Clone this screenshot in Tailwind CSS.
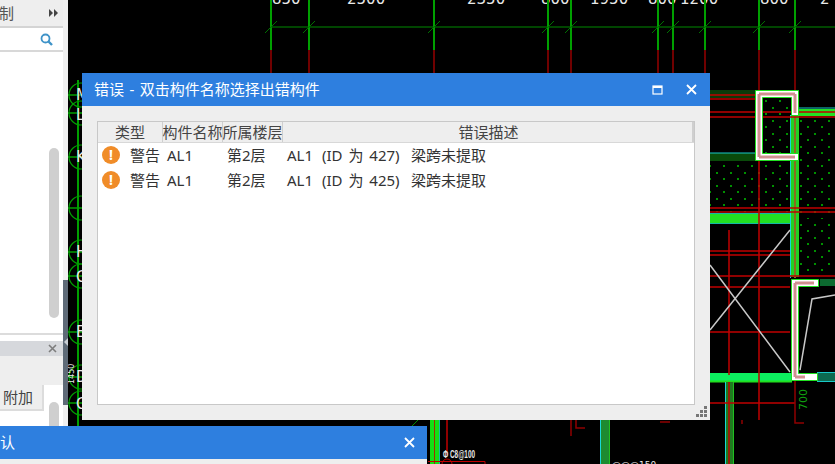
<!DOCTYPE html>
<html lang="en">
<head>
  <meta charset="UTF-8">
  <title>错误</title>
  <script src="https://cdn.jsdelivr.net/npm/@tailwindcss/browser@4"></script>
</head>
<body class="bg-black">
  <main class="relative w-[835px] h-[464px] overflow-hidden bg-black font-['Noto_Sans','Noto_Sans_CJK_SC',sans-serif] text-[15px] leading-none text-[#333]">

    <!-- cad canvas -->
    <svg class="absolute left-0 top-0" width="835" height="464" viewBox="0 0 835 464" fill="none">
      <g font-family="DejaVu Sans" font-size="15" fill="#e8e8e8">
        <text x="272" y="4">850</text><text x="347" y="4">2500</text><text x="467" y="4">2350</text>
        <text x="541" y="4">800</text><text x="590" y="4">1950</text><text x="648" y="4">800</text>
        <text x="680" y="4">1200</text><text x="760" y="4">800</text><text x="820" y="4">2</text>
      </g>
      <path d="M271 0V50M309 0V50M434 0V50M548 0V50M571 0V50M658 0V50M673 0V50M705 0V50M759 0V50M795 0V50" stroke="#00a000" stroke-width="2"/>
      <path d="M271 50V73M309 50V73M434 50V73M548 50V73M571 50V73M658 50V73M673 50V73M705 50V73M759 50V90M795 50V90" stroke="#700000" stroke-width="2"/>
      <path d="M271 27H835" stroke="#008a00" stroke-width="1"/>
      <path d="M265 33L277 21M303 33L315 21M428 33L440 21M542 33L554 21M565 33L577 21M652 33L664 21M667 33L679 21M699 33L711 21M753 33L765 21M789 33L801 21" stroke="#007000" stroke-width="1"/>

      <!-- left axis bubbles -->
      <g stroke="#00a000" stroke-width="1.200">
        <path d="M78 80V464" stroke-width="2"/>
        <circle cx="81" cy="95" r="12"/><circle cx="81" cy="113" r="12"/><circle cx="81" cy="157" r="12"/>
        <circle cx="81" cy="208" r="12"/><circle cx="81" cy="252" r="12"/><circle cx="81" cy="276" r="12"/>
        <circle cx="81" cy="332" r="12"/><circle cx="81" cy="377" r="12"/><circle cx="81" cy="403" r="12"/>
        <path d="M68 95H82M68 113H82M68 157H82M68 208H82M68 252H82M68 276H82M68 332H82M68 377H82M68 403H82" stroke-width="1.500"/>
      </g>
      <g font-family="DejaVu Sans" font-size="15" fill="#e8e8e8">
        <text x="76" y="100">M</text><text x="76" y="120">L</text><text x="76" y="162">K</text>
        <text x="76" y="257">H</text><text x="76" y="282">G</text><text x="76" y="337">E</text>
        <text x="76" y="382">D</text><text x="76" y="409">C</text>
      </g>
      <text transform="translate(74 384) rotate(-90)" font-family="DejaVu Sans" font-size="8" fill="#e8e8e8">1450</text>

      <!-- hatch -->
      <defs>
        <pattern id="dots" width="14" height="13" patternUnits="userSpaceOnUse">
          <rect x="2" y="3" width="2" height="2" fill="#009000"/>
          <rect x="9" y="9" width="2" height="2" fill="#009000"/>
        </pattern>
      </defs>
      <rect x="710" y="165" width="80" height="47" fill="url(#dots)"/>
      <rect x="763" y="100" width="27" height="53" fill="url(#dots)"/>
      <rect x="800" y="118" width="35" height="95" fill="url(#dots)"/>
      <rect x="800" y="218" width="35" height="58" fill="url(#dots)"/>

      <!-- beams -->
      <rect x="710" y="90" width="45" height="8" fill="#0a3a0a"/>
      <rect x="710" y="153" width="45" height="8" fill="#0a4a0a"/>
      <path d="M710 153H755" stroke="#18c8c8"/>
      <rect x="710" y="214" width="85" height="9" fill="#22e022"/>
      <path d="M710 223.500H790M710 213.500H790" stroke="#14b8a8"/>
      <rect x="799" y="109" width="36" height="7" fill="#22e022"/>
      <path d="M799 108H835" stroke="#18c8c8"/>
      <rect x="790" y="115" width="9" height="162" fill="#22d022"/>
      <path d="M790.500 115V278" stroke="#18d8d8"/>
      <path d="M795 115V278" stroke="#8a6a20" stroke-width="2"/>
      <rect x="710" y="373" width="82" height="9" fill="#0cf060"/>
      <path d="M710 381.500H792" stroke="#20e020" stroke-width="2"/>
      <rect x="725" y="382" width="9" height="82" fill="#207a20"/>
      <path d="M725.500 382V464" stroke="#18d8d8"/>
      <path d="M733.500 382V464" stroke="#20c020"/>
      <rect x="820" y="279" width="15" height="7" fill="#0c6a30"/>
      <rect x="817" y="373" width="18" height="8" fill="#0c6a50"/>
      <path d="M817 372.500H835M817 381.500H835" stroke="#18c8c8"/>
      <rect x="430" y="420" width="10" height="44" fill="#14e014"/>
      <path d="M434.500 420V464" stroke="#a03000"/>
      <path d="M439.500 420V464" stroke="#18b8a8"/>
      <rect x="600" y="420" width="10" height="44" fill="#1e8a30"/>
      <path d="M600.500 420V464" stroke="#18d8d8"/>
      <path d="M609.500 420V464" stroke="#20c020"/>

      <!-- red axis lines -->
      <g stroke="#c00000" stroke-width="1.500">
        <path d="M710 95H755M710 99H755M710 112H835M710 117H835M710 208H835M710 212H835"/>
        <path d="M710 251H790M710 255H790M710 276H835M710 287H790M710 332H790M710 403H795"/>
        <path d="M729 230V375M759 160V420M729 382V464M447 420V455"/>
      </g>
      <path d="M571 420V436M576 420V428H585M660 422H670M795 380V423H804M742 420V424" stroke="#900000" stroke-width="1.500"/>
      <path d="M428 461.500H485V464" stroke="#c00000"/>
      <circle cx="447" cy="464" r="5" stroke="#c00000"/>
      <path d="M412 426L418 420" stroke="#008a00"/>

      <!-- white cross and outline -->
      <path d="M790 230L710 330M710 265L790 372M835 295L812 299L800 370" stroke="#c8c8c8" stroke-width="1.500"/>

      <!-- white walls -->
      <g fill="#fff" stroke="#20e020">
        <path d="M755.500 90.500H798.500V115.500H791.500V97.500H762.500V153.500H798.500V160.500H755.500Z"/>
        <path d="M791.500 279.500H818.500V286.500H798.500V373.500H817.500V380.500H791.500Z"/>
      </g>
      <path d="M759 94V157M759 94H795M795 94V113M759 157H795M795 283V377M795 283H814M795 377H805" stroke="#d09090" stroke-width="3"/>

      <text x="443" y="458" font-family="Liberation Sans" font-size="10" font-weight="bold" fill="#e8e8e8" textLength="32" lengthAdjust="spacingAndGlyphs">Φ C8@100</text>
      <text x="612" y="468" font-family="DejaVu Sans" font-size="9" fill="#e8e8e8">@@@150</text>
      <text transform="translate(807 410) rotate(-90)" font-family="DejaVu Sans" font-size="11" fill="#10a010">700</text>
    </svg>

    <!-- left dock panel -->
    <aside class="absolute left-0 top-0 flex h-[464px] w-[68px]">
      <div class="flex w-[63px] flex-col bg-white">
        <div class="flex h-[28px] items-center justify-between border-b-2 border-[#d4d4d4] bg-[#eeeeee] pr-[5px]">
          <span class="ml-[-1px] text-[#555]">制</span>
          <svg width="9" height="8" viewBox="0 0 9 8" fill="#444"><path d="M0 0L4 4L0 8ZM5 0L9 4L5 8Z"/></svg>
        </div>
        <div class="flex h-[24px] items-center justify-end border-b-2 border-[#d8d8d8] pr-[10px]">
          <svg width="13" height="13" viewBox="0 0 13 13" fill="none">
            <circle cx="5.500" cy="5.500" r="4" stroke="#3f93c8" stroke-width="1.800"/>
            <path d="M8.500 8.500L12 12" stroke="#3f93c8" stroke-width="2.400"/>
          </svg>
        </div>
        <div class="flex h-[283px] justify-end border-b-2 border-[#dcdcdc] pr-[4px]">
          <div class="mt-[96px] h-[170px] w-[10px] rounded-full bg-[#cfcfcf]"></div>
        </div>
        <div class="h-[6px] bg-white"></div>
        <div class="flex h-[15px] items-center justify-end bg-[#d6d8dc] pr-[6px]">
          <svg width="9" height="9" viewBox="0 0 9 9" fill="none"><path d="M1 1L8 8M8 1L1 8" stroke="#7d7d7d" stroke-width="1.600"/></svg>
        </div>
        <div class="h-[29px] bg-[#eeeeee]"></div>
        <div class="flex flex-1 bg-white">
          <div class="flex h-[26px] w-[44px] items-center justify-end border-r-2 border-b-2 border-[#dcdcdc] bg-[#eeeeee] pr-[9px] text-[#444]">附加</div>
          <div class="mt-[17px] ml-[5px] h-[40px] w-[10px] rounded-full bg-[#cfcfcf]"></div>
        </div>
      </div>
      <div class="flex w-[5px] flex-col bg-[#f0f0f0]">
        <div class="mt-[280px] flex h-[125px] flex-col items-center bg-[#5f6b78] pt-[58px]">
          <div class="h-0 w-0 border-y-[4px] border-r-[4px] border-y-transparent border-r-[#c9ced4]"></div>
        </div>
      </div>
    </aside>

    <!-- confirm dialog -->
    <section class="absolute left-[-300px] top-[426px] w-[727px]">
      <div class="flex h-[33px] items-center justify-between bg-[#2e7fdf] pr-[12px] pl-[300px] text-white">
        <span class="ml-[-15px]">确认</span>
        <svg width="11" height="11" viewBox="0 0 11 11" fill="none"><path d="M1 1L10 10M10 1L1 10" stroke="#fff" stroke-width="1.800"/></svg>
      </div>
      <div class="h-[10px] bg-[#eeeeee]"></div>
    </section>

    <!-- error dialog -->
    <section class="absolute left-[82px] top-[73px] flex h-[347px] w-[628px] flex-col bg-[#eeeeee]">
      <div class="flex h-[33px] shrink-0 items-center bg-[#2e7fdf] pr-[13px] pl-[12px] text-white">
        <span class="flex-1 [word-spacing:1.500px]">错误 - 双击构件名称选择出错构件</span>
        <svg class="mr-[23px]" width="11" height="10" viewBox="0 0 11 10" fill="none"><rect x="1" y="1" width="9" height="8" stroke="#fff" stroke-width="1.200"/><path d="M1 2H10" stroke="#fff" stroke-width="2"/></svg>
        <svg width="11" height="11" viewBox="0 0 11 11" fill="none"><path d="M1 1L10 10M10 1L1 10" stroke="#fff" stroke-width="1.800"/></svg>
      </div>
      <div class="mx-[15px] mt-[15px] flex h-[284px] flex-col border border-[#c8c8c8] bg-white">
        <div class="flex h-[21px] shrink-0 items-center border-b border-[#d8d8d8] bg-[#eeeeee] whitespace-nowrap text-[#444]">
          <span class="flex h-full w-[65px] shrink-0 items-center justify-center border-r border-[#cfcfcf]">类型</span>
          <span class="flex h-full w-[60px] shrink-0 items-center justify-center border-r border-[#cfcfcf]">构件名称</span>
          <span class="flex h-full w-[60px] shrink-0 items-center justify-center border-r border-[#cfcfcf]">所属楼层</span>
          <span class="flex h-full flex-1 items-center justify-center border-r-2 border-[#cfcfcf] pl-[2px]">错误描述</span>
        </div>
        <ul class="text-[#333] whitespace-nowrap">
          <li class="flex h-[25px] items-center">
            <span class="mt-[-2px] ml-[4px] flex size-[18px] items-center justify-center rounded-full bg-[#f08c28] text-[14px] font-bold text-white">!</span>
            <span class="ml-[10px] w-[37px]">警告</span>
            <span class="w-[60px]">AL1</span>
            <span class="w-[60px]">第2层</span>
            <span class="w-[35px]">AL1</span>
            <span class="w-[89px] [word-spacing:2px]">(ID 为 427)</span>
            <span>梁跨未提取</span>
          </li>
          <li class="flex h-[25px] items-center">
            <span class="mt-[-2px] ml-[4px] flex size-[18px] items-center justify-center rounded-full bg-[#f08c28] text-[14px] font-bold text-white">!</span>
            <span class="ml-[10px] w-[37px]">警告</span>
            <span class="w-[60px]">AL1</span>
            <span class="w-[60px]">第2层</span>
            <span class="w-[35px]">AL1</span>
            <span class="w-[89px] [word-spacing:2px]">(ID 为 425)</span>
            <span>梁跨未提取</span>
          </li>
        </ul>
      </div>
      <div class="flex flex-1 items-end justify-end pr-[3px] pb-[3px]">
        <svg width="11" height="11" viewBox="0 0 11 11" fill="#777"><rect x="8" y="0" width="3" height="3"/><rect x="4" y="4" width="3" height="3"/><rect x="8" y="4" width="3" height="3"/><rect x="0" y="8" width="3" height="3"/><rect x="4" y="8" width="3" height="3"/><rect x="8" y="8" width="3" height="3"/></svg>
      </div>
    </section>
  </main>
</body>
</html>
